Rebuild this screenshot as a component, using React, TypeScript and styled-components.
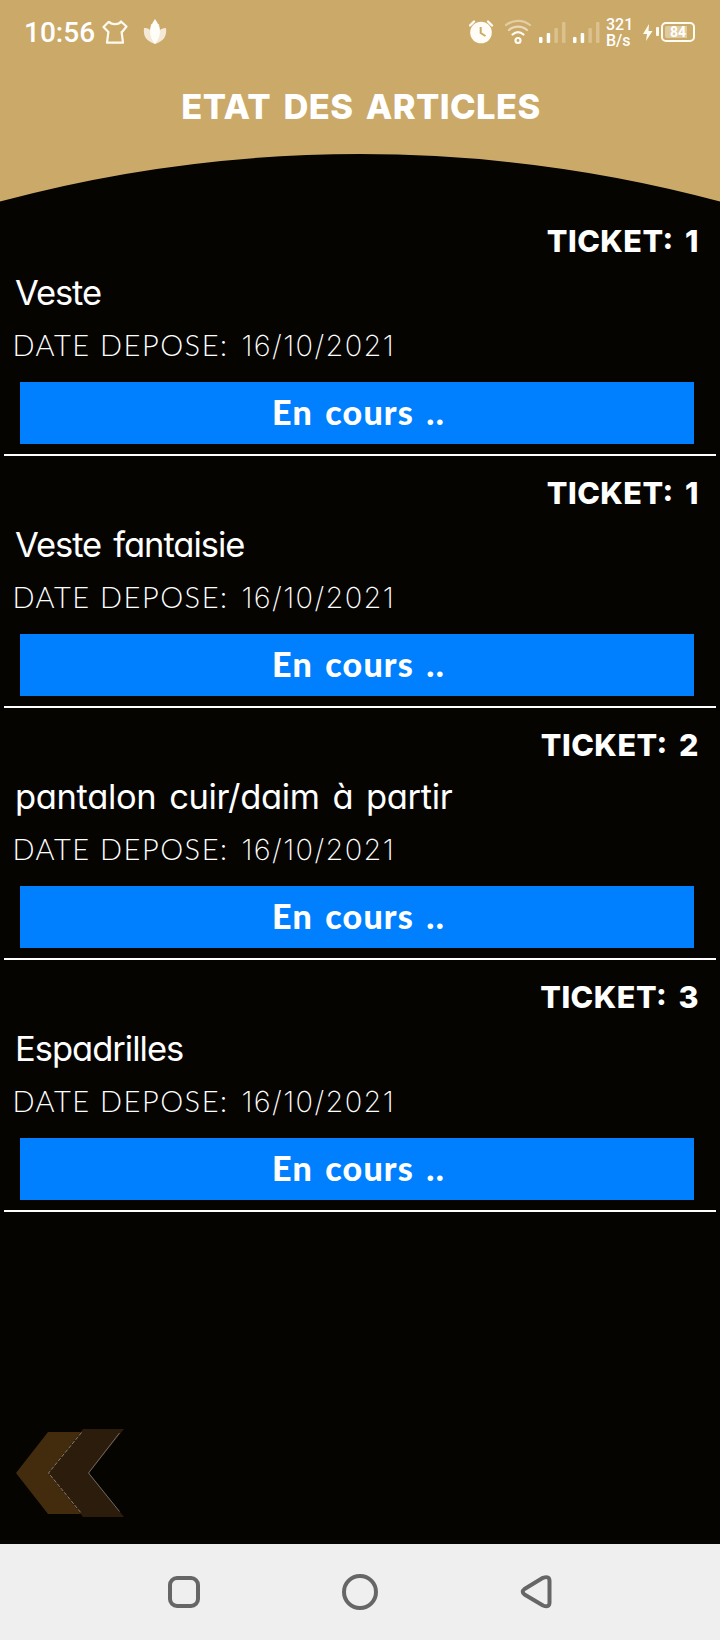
import React from "react";
import styled, { createGlobalStyle } from "styled-components";

const GlobalStyle = createGlobalStyle`
  * { box-sizing: border-box; }
  body { margin: 0; background: #050401; }
`;

const GOLD = "#cba969";
const BLACK = "#050401";

const Screen = styled.div`
  width: 720px;
  height: 1640px;
  display: flex;
  flex-direction: column;
  overflow: hidden;
  background: ${BLACK};
  color: #fff;
  font-family: Lato, "Liberation Sans", sans-serif;
`;

const Header = styled.header`
  height: 204px;
  display: flex;
  flex-direction: column;
  background: linear-gradient(${GOLD} 190px, ${BLACK} 190px);
`;

const StatusBar = styled.div`
  height: 66px;
  display: flex;
  align-items: flex-start;
  justify-content: space-between;
  padding: 0 25px 0 24px;
  font-family: Roboto, sans-serif;
`;

const StatusGroup = styled.div`
  display: flex;
  align-items: flex-start;
`;

const Clock = styled.span`
  width: 78px;
  padding-top: 16px;
  font-size: 28px;
  font-weight: 500;
  line-height: 34px;
`;

const NetSpeed = styled.div`
  width: 37px;
  padding-top: 17px;
  font-size: 16px;
  font-weight: 500;
  line-height: 16px;
`;

const Battery = styled.div`
  width: 34px;
  height: 20px;
  margin-top: 22px;
  padding: 2px;
  border: 2px solid #fffdf2;
  border-radius: 5px;
`;

const BatteryLevel = styled.div`
  height: 12px;
  border-radius: 2px;
  background: linear-gradient(90deg, #e0caa0 84%, transparent 84%);
  font-size: 14px;
  font-weight: 700;
  line-height: 13px;
  text-align: center;
`;

const Title = styled.h1`
  height: 84px;
  margin: 0;
  padding-left: 2px;
  font-family: Inter, sans-serif;
  font-size: 34.5px;
  font-weight: 800;
  line-height: 81px;
  letter-spacing: 0.4px;
  word-spacing: 4.5px;
  text-align: center;
`;

const Curve = styled.svg`
  display: block;
  flex: none;
`;

const List = styled.main`
  flex: 1;
`;

const Article = styled.article`
  height: 252px;
  margin: 0 4px;
  display: flex;
  flex-direction: column;
  border-bottom: 2px solid #fff;
`;

const Ticket = styled.div`
  height: 72px;
  padding: 0 17px 0 0;
  font-family: Inter, sans-serif;
  font-size: 30.5px;
  font-weight: 800;
  line-height: 74px;
  letter-spacing: 0.5px;
  word-spacing: 4px;
  text-align: right;
`;

const Colon = styled.span`
  position: relative;
  top: -3px;
`;

const Name = styled.div<{ $tracking: number }>`
  height: 50px;
  padding-left: 11px;
  font-family: Inter, sans-serif;
  font-size: 34.5px;
  font-feature-settings: "cv11";
  line-height: 34px;
  letter-spacing: ${(p) => p.$tracking}px;
  word-spacing: 3.5px;
  white-space: nowrap;
`;

const Deposit = styled.div`
  height: 56px;
  padding-left: 8.5px;
  display: flex;
  align-items: baseline;
  gap: 13px;
  font-size: 29px;
  font-weight: 300;
  line-height: 37px;
  letter-spacing: 1.5px;
`;

const DepositDate = styled.span`
  font-family: Inter, sans-serif;
  font-weight: 200;
  letter-spacing: 1.35px;
`;

const Status = styled.div`
  height: 62px;
  margin: 0 22px 0 16px;
  padding-left: 3px;
  background: #0080ff;
  font-size: 34px;
  font-weight: 900;
  line-height: 60px;
  letter-spacing: 1.2px;
  word-spacing: 3px;
  text-align: center;
`;

const BackArrow = styled.svg`
  display: block;
  margin: 0 0 22px 14px;
`;

const NavBar = styled.nav`
  height: 96px;
  display: flex;
  justify-content: center;
  align-items: center;
  gap: 136px;
  background: #efefef;
`;

const articles = [
  { ticket: 1, name: "Veste", tracking: -1.1 },
  { ticket: 1, name: "Veste fantaisie", tracking: -1.05 },
  { ticket: 2, name: "pantalon cuir/daim à partir", tracking: -0.35 },
  { ticket: 3, name: "Espadrilles", tracking: -1 },
];

const faded = "#e3cda3";

export default function App() {
  return (
    <>
      <GlobalStyle />
      <Screen>
        <Header>
          <StatusBar>
            <StatusGroup>
              <Clock>10:56</Clock>
              <svg width="68" height="60" viewBox="102 0 68 60" fill="none">
                <path
                  d="M109 21.500C111 25 119 25 121 21.500L126.500 26.500L122.500 31.500L121.600 32L123 42.700H107L108.400 32L103.500 27L109 21.500"
                  stroke="#fffaf0" strokeWidth="2.200" strokeLinejoin="round"
                />
                <path d="M155 44C146 41 143 36 144 28C148 28 149 29 150 30L151 24C153 24 154 26 155 28C156 26 157 24 159 24L160 30C161 29 163 28 166 28C167 36 164 41 155 44Z" fill="#f3e9d6" />
                <path d="M155 19C161 27 162 36 155 44C148 36 149 27 155 19Z" fill="#fffdf8" />
              </svg>
            </StatusGroup>
            <StatusGroup>
              <svg width="137" height="60" viewBox="469 0 137 60" fill="none">
                <circle cx="481" cy="32.500" r="10.800" fill="#fffdf5" />
                <path d="M470 25.500L474 21.500M492 25.500L488 21.500" stroke="#fffdf5" strokeWidth="2.400" strokeLinecap="round" />
                <path d="M480.700 27V33L485.500 36" stroke={GOLD} strokeWidth="2" />
                <g strokeWidth="2.200" strokeLinecap="round">
                  <path d="M506 25C513 19.500 523 19.500 530 25" stroke={faded} />
                  <path d="M509 30C514 25.500 522 25.500 527 30" stroke="#ead9b8" />
                  <path d="M512.500 34.500C516 31.500 520 31.500 523.500 34.500" stroke="#fffdf5" />
                  <circle cx="518" cy="40.500" r="2.500" stroke="#fffdf5" />
                </g>
                {[539, 573].map((x) => (
                  <g key={x}>
                    <rect x={x} y="37" width="3.500" height="6" rx="1" fill="#fff" />
                    <rect x={x + 7.7} y="33" width="3.500" height="10" rx="1" fill="#fff" />
                    <rect x={x + 15.4} y="28" width="3.500" height="15" rx="1" fill="#dbc18e" />
                    <rect x={x + 23} y="22" width="3.500" height="21" rx="1" fill="#dbc18e" />
                  </g>
                ))}
              </svg>
              <NetSpeed>
                321
                <br />
                B/s
              </NetSpeed>
              <svg width="18" height="60" viewBox="643 0 18 60">
                <path d="M649 24L643 34H647L646 41L652.500 31H648.500Z" fill="#fffdf2" />
                <rect x="656" y="27" width="3" height="9" rx="1" fill="#fffdf2" />
              </svg>
              <Battery>
                <BatteryLevel>84</BatteryLevel>
              </Battery>
            </StatusGroup>
          </StatusBar>
          <Title>ETAT DES ARTICLES</Title>
          <Curve width="720" height="54" viewBox="0 150 720 54">
            <rect y="150" width="720" height="54" fill={BLACK} />
            <path d="M0 150V201.500A1390 1390 0 0 1 720 201.500V150Z" fill={GOLD} />
          </Curve>
        </Header>
        <List>
          {articles.map((a, i) => (
            <Article key={i}>
              <Ticket>
                TICKET<Colon>:</Colon> {a.ticket}
              </Ticket>
              <Name $tracking={a.tracking}>{a.name}</Name>
              <Deposit>
                <span>DATE DEPOSE:</span>
                <DepositDate>16/10/2021</DepositDate>
              </Deposit>
              <Status>En cours ..</Status>
            </Article>
          ))}
        </List>
        <BackArrow width="112" height="94" viewBox="14 1428 112 94">
          <path d="M48 1432H83L50 1473L83 1514H48L16 1473Z" fill="#432c0e" />
          <path d="M83 1429H124L89 1473L124 1517H83L48 1473Z" fill="#2b1c0c" />
          <path d="M81.500 1432.500L48.500 1473L81.500 1513.500" fill="none" stroke="#a3957c" strokeWidth="0.800" strokeDasharray="4 1.500" />
          <path d="M119.500 1433L88.500 1473L119.500 1511.500" fill="none" stroke="#77736b" strokeWidth="0.900" />
        </BackArrow>
        <NavBar>
          <svg width="40" height="40" viewBox="164 1572 40 40">
            <rect x="170" y="1578" width="28" height="28" rx="7" fill="none" stroke="#666" strokeWidth="4" />
          </svg>
          <svg width="40" height="40" viewBox="340 1572 40 40">
            <circle cx="360" cy="1592" r="16" fill="none" stroke="#666" strokeWidth="4" />
          </svg>
          <svg width="40" height="40" viewBox="516 1572 40 40">
            <path d="M524.500 1589L543 1577.800Q549.500 1575.500 549.500 1581V1602.500Q549.500 1608 543 1605.500L524.500 1594.500Q521 1591.800 524.500 1589Z" fill="none" stroke="#666" strokeWidth="4" strokeLinejoin="round" />
          </svg>
        </NavBar>
      </Screen>
    </>
  );
}
